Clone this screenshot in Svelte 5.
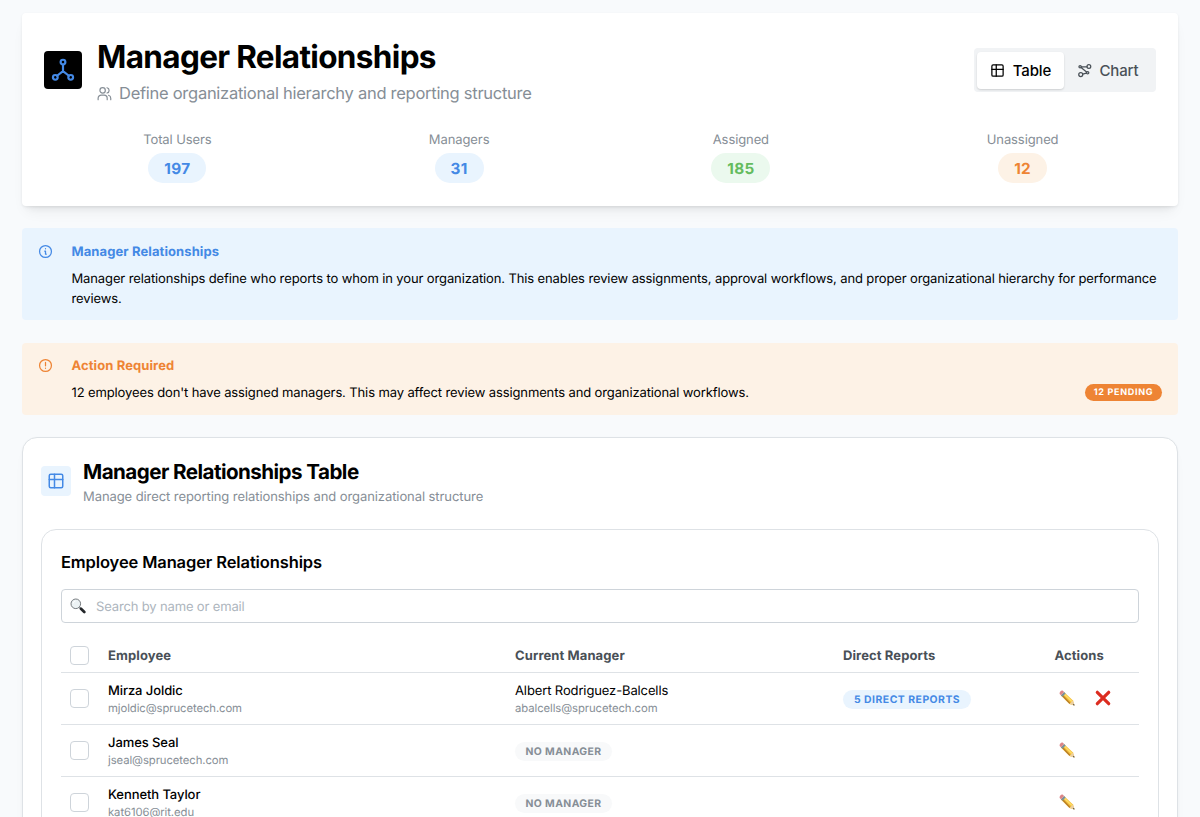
<script>
	let view = 'table';
	let search = '';

	const stats = [
		{ label: 'Total Users', value: 197, color: 'blue' },
		{ label: 'Managers', value: 31, color: 'blue' },
		{ label: 'Assigned', value: 185, color: 'green' },
		{ label: 'Unassigned', value: 12, color: 'orange' }
	];

	const employees = [
		{
			name: 'Mirza Joldic',
			email: 'mjoldic@sprucetech.com',
			manager: { name: 'Albert Rodriguez-Balcells', email: 'abalcells@sprucetech.com' },
			reports: 5
		},
		{ name: 'James Seal', email: 'jseal@sprucetech.com', manager: null, reports: 0 },
		{ name: 'Kenneth Taylor', email: 'kat6106@rit.edu', manager: null, reports: 0 }
	];

	$: filtered = employees.filter((e) =>
		(e.name + ' ' + e.email).toLowerCase().includes(search.toLowerCase())
	);
</script>

<main>
	<header class="hero">
		<div class="hero-top">
			<div class="logo">
				<svg width="26" height="26" viewBox="0 0 24 24" class="line">
					<circle cx="12" cy="4.700" r="2.200" />
					<circle cx="4.900" cy="18.800" r="2.200" />
					<circle cx="19.100" cy="18.800" r="2.200" />
					<path d="M12 6.900v6.100M12 13l-5.400 4.300M12 13l5.400 4.300" />
				</svg>
			</div>
			<div class="hero-text">
				<h1>Manager Relationships</h1>
				<p>
					<svg width="15" height="15" viewBox="0 0 24 24" class="line thin">
						<circle cx="9" cy="7" r="4.300" />
						<path d="M1.800 22v-2.500a5 5 0 0 1 5-5h4.500a5 5 0 0 1 5 5V22M16 2.800a4.300 4.300 0 0 1 0 8.400M22 22v-2.500a5 5 0 0 0-3.500-4.700" />
					</svg>
					<span>Define organizational hierarchy and reporting structure</span>
				</p>
			</div>
			<div class="toggle">
				<button class:active={view === 'table'} on:click={() => (view = 'table')}>
					<svg width="15" height="15" viewBox="0 0 24 24" class="line">
						<rect x="3" y="3" width="18" height="18" rx="2" />
						<path d="M3 10h18M10 3v18" />
					</svg>
					<span>Table</span>
				</button>
				<button class:active={view === 'chart'} on:click={() => (view = 'chart')}>
					<svg width="15" height="15" viewBox="0 0 24 24" class="line">
						<circle cx="19" cy="5.500" r="3" />
						<circle cx="5" cy="6" r="1.900" />
						<circle cx="6" cy="18.500" r="3.200" />
						<circle cx="17" cy="15.500" r="1.900" />
						<path d="M7 6h9M6.500 7.300l8.800 7M9.200 17.800l5.800-1.600" />
					</svg>
					<span>Chart</span>
				</button>
			</div>
		</div>
		<div class="stats">
			{#each stats as stat}
				<div class="stat">
					<span class="stat-label">{stat.label}</span>
					<span class="stat-value {stat.color}">{stat.value}</span>
				</div>
			{/each}
		</div>
	</header>

	<section class="alert info">
		<svg width="15" height="15" viewBox="0 0 24 24" class="line">
			<circle cx="12" cy="12" r="9.500" />
			<path d="M12 7.500v.2M10.800 11.500h1.200v4.700h1.200" />
		</svg>
		<div class="alert-body">
			<h4>Manager Relationships</h4>
			<p>
				Manager relationships define who reports to whom in your organization. This enables review
				assignments, approval workflows, and proper organizational hierarchy for performance
				reviews.
			</p>
		</div>
	</section>

	<section class="alert warn">
		<svg width="15" height="15" viewBox="0 0 24 24" class="line">
			<circle cx="12" cy="12" r="9.500" />
			<path d="M12 7v5.500M12 16.300v.2" />
		</svg>
		<div class="alert-body">
			<h4>Action Required</h4>
			<div class="alert-row">
				<p>
					12 employees don't have assigned managers. This may affect review assignments and
					organizational workflows.
				</p>
				<span class="pending">12 PENDING</span>
			</div>
		</div>
	</section>

	<section class="card">
		<div class="card-head">
			<div class="card-icon">
				<svg width="18" height="18" viewBox="0 0 24 24" class="line">
					<rect x="3" y="3" width="18" height="18" rx="2" />
					<path d="M3 10h18M10 3v18" />
				</svg>
			</div>
			<div class="card-title">
				<h2>Manager Relationships Table</h2>
				<p>Manage direct reporting relationships and organizational structure</p>
			</div>
		</div>

		<div class="panel">
			<h3>Employee Manager Relationships</h3>
			<label class="search">
				<svg width="16" height="16" viewBox="0 0 16 16">
					<path d="M9.300 9.300l1.600 1.500" stroke="#8b9095" stroke-width="1.500" />
					<path d="M11 10.800l3.300 3.200" stroke="#24272a" stroke-width="2.700" stroke-linecap="round" />
					<circle cx="5.800" cy="5.800" r="4.800" fill="#edf3f5" stroke="#777c80" stroke-width="1" />
					<path d="M3 5.500a3 3 0 0 1 2.500-2.500" fill="none" stroke="#fff" />
				</svg>
				<input type="text" placeholder="Search by name or email" bind:value={search} />
			</label>

			<table>
				<thead>
					<tr>
						<th class="c-check"><input type="checkbox" aria-label="Select all" /></th>
						<th class="c-employee">Employee</th>
						<th class="c-manager">Current Manager</th>
						<th class="c-reports">Direct Reports</th>
						<th class="c-actions">Actions</th>
					</tr>
				</thead>
				<tbody>
					{#each filtered as employee}
						<tr>
							<td><input type="checkbox" aria-label="Select {employee.name}" /></td>
							<td>
								<div class="name strong">{employee.name}</div>
								<div class="email">{employee.email}</div>
							</td>
							<td>
								{#if employee.manager}
									<div class="name">{employee.manager.name}</div>
									<div class="email">{employee.manager.email}</div>
								{:else}
									<span class="badge gray">NO MANAGER</span>
								{/if}
							</td>
							<td>
								{#if employee.reports}
									<span class="badge blue">{employee.reports} DIRECT REPORTS</span>
								{/if}
							</td>
							<td>
								<div class="actions">
									<button class="icon" aria-label="Edit manager">
										<svg width="16" height="16" viewBox="0 0 16 16">
											<path d="M5.200 2.200l8.800 8.300 1.500 5-5-1.400-8.700-8.500z" fill="#f3bd38" />
											<path d="M2.200 5.200l8.300 8.900 1-1-8.200-8.800z" fill="#b98029" />
											<path d="M4.900 2.800l8.500 8.300-1 1-8.600-8.300z" fill="#ffde68" />
											<path d="M10.500 14.100l3.500-3.600 1.500 5z" fill="#ecd0a2" />
											<path d="M13.800 15l1.200-1.200.5 1.700z" fill="#333" />
											<path d="M1.900 5.200l3.200-3.200 1.500 1.400-3.200 3.300z" fill="#76929f" />
											<path d="M2.800.6c.5-.1.900 0 1.300.4l1 1-3.200 3.200-1-1C0 3.200 1.500.8 2.800.6z" fill="#dc8587" />
										</svg>
									</button>
									{#if employee.manager}
										<button class="icon" aria-label="Remove manager">
											<svg width="16" height="16" viewBox="0 0 16 16">
												<path d="M2.300 2.300l11.400 11.400M13.700 2.300L2.300 13.700" stroke="#dc2c20" stroke-width="3.200" stroke-linecap="round" />
											</svg>
										</button>
									{/if}
								</div>
							</td>
						</tr>
					{/each}
				</tbody>
			</table>
		</div>
	</section>
</main>

<style>
	:global(body) {
		background: #f8fafc;
		overflow: hidden;
	}
	main {
		height: 817px;
		overflow: hidden;
		box-sizing: border-box;
		padding: 13px 22px 0;
		font-family: Inter, 'Liberation Sans', sans-serif;
		font-size: 13px;
		color: #000;
		text-rendering: geometricPrecision;
	}
	h1,
	h2,
	h3,
	h4,
	p {
		margin: 0;
	}
	svg {
		display: block;
		flex-shrink: 0;
	}
	.line {
		fill: none;
		stroke: currentColor;
		stroke-width: 2;
		stroke-linecap: round;
		stroke-linejoin: round;
	}
	.thin {
		stroke-width: 1.9;
	}
	button {
		border: none;
		background: none;
		font-family: inherit;
		padding: 0;
		cursor: pointer;
	}
	.hero {
		height: 193px;
		box-sizing: border-box;
		padding: 22px;
		background: #fff;
		border-radius: 4px;
		box-shadow: 0 1px 3px rgba(0, 0, 0, 0.07), 0 9px 14px -5px rgba(0, 0, 0, 0.07), 0 7px 7px -5px rgba(0, 0, 0, 0.05);
	}
	.hero-top {
		display: flex;
		align-items: center;
		height: 71px;
	}
	.logo {
		display: flex;
		align-items: center;
		justify-content: center;
		width: 38px;
		height: 38px;
		margin-bottom: 1px;
		border-radius: 4px;
		background: #000;
		color: #4489e5;
	}
	.hero-text {
		flex: 1;
		margin-left: 15px;
	}
	h1 {
		font-size: 31.5px;
		line-height: 44px;
		font-weight: 700;
		letter-spacing: -0.66px;
		white-space: nowrap;
	}
	.hero-text p {
		display: flex;
		align-items: center;
		gap: 7px;
		margin-top: 2px;
		font-size: 16.5px;
		line-height: 25px;
		letter-spacing: -0.27px;
		color: #868e96;
	}
	.toggle {
		display: flex;
		box-sizing: border-box;
		width: 182px;
		height: 44px;
		margin-bottom: 1px;
		padding: 4px 3px;
		border-radius: 4px;
		background: #f1f3f5;
	}
	.toggle button {
		display: flex;
		align-items: center;
		justify-content: center;
		gap: 8px;
		width: 87px;
		height: 37px;
		border-radius: 4px;
		font-size: 15px;
		font-weight: 500;
		letter-spacing: -0.15px;
		color: #495057;
	}
	.toggle .active {
		background: #fff;
		color: #000;
		box-shadow: 0 1px 2px rgba(0, 0, 0, 0.15);
	}
	.stats {
		display: grid;
		grid-template-columns: repeat(4, 1fr);
		gap: 15px;
		margin-top: 24px;
	}
	.stat {
		display: flex;
		flex-direction: column;
		align-items: center;
		gap: 3px;
	}
	.stat-label {
		font-size: 13px;
		line-height: 20px;
		letter-spacing: -0.1px;
		color: #868e96;
	}
	.stat-value {
		padding: 1px 16px 0;
		border-radius: 15px;
		font-size: 15.3px;
		line-height: 29px;
		font-weight: 700;
		letter-spacing: 0.3px;
	}
	.blue {
		background: #e9f4fe;
		color: #4489e5;
	}
	.green {
		background: #ebf9ee;
		color: #64bc5e;
	}
	.orange {
		background: #fdf2e6;
		color: #ee8434;
	}
	.alert {
		display: flex;
		box-sizing: border-box;
		padding: 14px 15px 12px;
		border-radius: 4px;
	}
	.alert > svg {
		margin: 1.5px 0 0 0.5px;
	}
	.info {
		height: 92px;
		margin-top: 22px;
		background: #e9f4fe;
		color: #4489e5;
	}
	.warn {
		height: 72px;
		margin-top: 23px;
		padding-top: 13px;
		padding-right: 16px;
		background: #fdf2e6;
		color: #ee8434;
	}
	.alert-body {
		flex: 1;
		margin-left: 19px;
	}
	h4 {
		font-size: 13px;
		line-height: 20px;
		font-weight: 700;
		letter-spacing: 0.1px;
	}
	.alert p {
		font-size: 13px;
		line-height: 20px;
		letter-spacing: -0.12px;
		color: #000;
	}
	.info p,
	.alert-row {
		margin-top: 7px;
	}
	.alert-row {
		display: flex;
		align-items: center;
		justify-content: space-between;
	}
	.pending {
		width: 77px;
		margin-bottom: 2px;
		border-radius: 9px;
		background: #ee8434;
		color: #fff;
		font-size: 9px;
		line-height: 17px;
		font-weight: 700;
		letter-spacing: 0.7px;
		text-align: center;
	}
	.card {
		box-sizing: border-box;
		height: 500px;
		margin-top: 22px;
		padding: 18px;
		border: 1px solid #dee2e6;
		border-radius: 15px;
		background: #fff;
		box-shadow: 0 1px 3px rgba(0, 0, 0, 0.04), 0 9px 14px -5px rgba(0, 0, 0, 0.05);
	}
	.card-head {
		display: flex;
		align-items: center;
		gap: 12px;
		height: 50px;
	}
	.card-icon {
		display: flex;
		align-items: center;
		justify-content: center;
		width: 30px;
		height: 30px;
		border-radius: 4px;
		background: #e9f4fe;
		color: #4489e5;
	}
	.card-title {
		padding-top: 3px;
	}
	h2 {
		font-size: 20.6px;
		line-height: 28px;
		font-weight: 700;
		letter-spacing: -0.55px;
	}
	.card-head p {
		margin-top: 1px;
		font-size: 13px;
		line-height: 20px;
		letter-spacing: -0.08px;
		color: #868e96;
	}
	.panel {
		box-sizing: border-box;
		height: 420px;
		margin-top: 23px;
		padding: 19px;
		border: 1px solid #dee2e6;
		border-radius: 15px;
	}
	h3 {
		font-size: 16.5px;
		line-height: 26px;
		font-weight: 600;
		letter-spacing: -0.12px;
	}
	.search {
		display: flex;
		align-items: center;
		gap: 10px;
		box-sizing: border-box;
		height: 34px;
		margin-top: 14px;
		padding: 0 8px;
		border: 1px solid #ced4da;
		border-radius: 4px;
	}
	.search input {
		flex: 1;
		padding: 2px 0 0;
		border: none;
		outline: none;
		background: none;
		font-family: inherit;
		font-size: 13px;
		letter-spacing: -0.15px;
		text-rendering: inherit;
	}
	.search input::placeholder {
		color: #adb5bd;
	}
	table {
		width: 100%;
		margin-top: 15px;
		table-layout: fixed;
		border-collapse: separate;
		border-spacing: 0;
	}
	th,
	td {
		box-sizing: border-box;
		padding: 0 9px;
		text-align: left;
		vertical-align: middle;
		border-bottom: 1px solid #dee2e6;
	}
	th {
		height: 35px;
		padding-top: 2px;
		font-size: 13px;
		font-weight: 700;
		letter-spacing: 0.1px;
		color: #495057;
	}
	td {
		height: 52px;
	}
	.c-check {
		width: 38px;
	}
	.c-employee {
		width: 407px;
	}
	.c-manager {
		width: 328px;
	}
	.c-reports {
		width: 211.5px;
	}
	.c-actions {
		width: 93.5px;
	}
	input[type='checkbox'] {
		appearance: none;
		display: block;
		box-sizing: border-box;
		width: 19px;
		height: 19px;
		margin: 0 0 1px;
		border: 1px solid #ced4da;
		border-radius: 4px;
		background: #fff;
	}
	.name {
		margin: 1px 0 -1px;
		font-size: 13px;
		line-height: 20px;
		letter-spacing: -0.12px;
	}
	.strong {
		font-weight: 500;
		letter-spacing: -0.08px;
	}
	.email {
		font-size: 11.3px;
		line-height: 17px;
		letter-spacing: -0.08px;
		color: #868e96;
	}
	.badge {
		display: inline-block;
		margin-top: 2px;
		padding: 1px 11px 0;
		border-radius: 10px;
		font-size: 10.4px;
		line-height: 18px;
		font-weight: 700;
		letter-spacing: 0.5px;
		white-space: nowrap;
	}
	.gray {
		padding: 1px 10.5px 0;
		background: #f8f9fa;
		color: #868e96;
		letter-spacing: 0.4px;
	}
	.actions {
		display: flex;
		gap: 19.5px;
		margin-bottom: 1px;
		padding-left: 4.5px;
	}
</style>
